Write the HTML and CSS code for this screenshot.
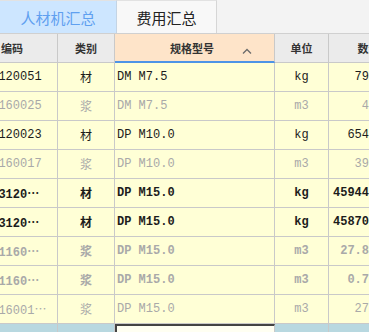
FILE: index.html
```html
<!DOCTYPE html>
<html lang="zh-CN">
<head>
    <meta charset="UTF-8">
    <title>人材机汇总</title>
    <link rel="stylesheet" href="styles.css">
</head>
<body>
    <div class="tabs">
        <div class="tab active">人材机汇总</div>
        <div class="tab">费用汇总</div>
    </div>
    <div class="grid-wrap">
        <table class="grid">
            <colgroup>
                <col class="c-code"><col class="c-type"><col class="c-spec"><col class="c-unit"><col class="c-qty">
            </colgroup>
            <thead>
                <tr>
                    <th class="code">编码</th>
                    <th>类别</th>
                    <th class="sorted">规格型号
                        <svg class="sort" width="10" height="6" viewBox="0 0 10 6"><polyline points="1,5.5 5,1.5 9,5.5" fill="none" stroke="#6b6b6b" stroke-width="1.3"/></svg>
                    </th>
                    <th>单位</th>
                    <th>数量</th>
                </tr>
            </thead>
            <tbody>
                <tr><td class="code">01120051</td><td class="type">材</td><td>DM M7.5</td><td class="unit">kg</td><td class="qty">79.2358</td></tr>
                <tr class="sub"><td class="code">02160025</td><td class="type">浆</td><td>DM M7.5</td><td class="unit">m3</td><td class="qty">4.1256</td></tr>
                <tr><td class="code">01120023</td><td class="type">材</td><td>DP M10.0</td><td class="unit">kg</td><td class="qty">6542.117</td></tr>
                <tr class="sub"><td class="code">02160017</td><td class="type">浆</td><td>DP M10.0</td><td class="unit">m3</td><td class="qty">39.1452</td></tr>
                <tr class="strong"><td class="code">013120⋯</td><td class="type">材</td><td>DP M15.0</td><td class="unit">kg</td><td class="qty">45944.1234</td></tr>
                <tr class="strong"><td class="code">013120⋯</td><td class="type">材</td><td>DP M15.0</td><td class="unit">kg</td><td class="qty">45870.9876</td></tr>
                <tr class="strong sub"><td class="code">021160⋯</td><td class="type">浆</td><td>DP M15.0</td><td class="unit">m3</td><td class="qty">27.812350</td></tr>
                <tr class="strong sub"><td class="code">021160⋯</td><td class="type">浆</td><td>DP M15.0</td><td class="unit">m3</td><td class="qty">0.712500</td></tr>
                <tr class="sub"><td class="code">0216001⋯</td><td class="type">浆</td><td>DP M15.0</td><td class="unit">m3</td><td class="qty">27.5000</td></tr>
                <tr class="current"><td class="code">04010107</td><td class="type">材</td><td class="focus">DP M20.0</td><td class="unit">kg</td><td class="qty">78.1200</td></tr>
            </tbody>
        </table>
    </div>
</body>
</html>
```

FILE: styles.css
```css
body { margin: 0; overflow: hidden; background: #f3f3f3; font-family: "Liberation Mono", "Noto Sans CJK SC", monospace; }

.tabs { display: flex; height: 33px; border-bottom: 1px solid #d0d0d0; background: #f3f3f3; }
.tab { width: 99px; display: flex; align-items: center; justify-content: center; border-right: 1px solid #d6d6d6; border-top: 1px solid #e2e2e2; background: #f8f8f8; color: #222; font-family: "Noto Sans CJK SC", sans-serif; font-size: 15px; }
.tab.active { width: 116px; background: #cde6ff; color: #5fa0f0; border-right-color: #c4d4e4; }

.grid-wrap { overflow: hidden; }
.grid { margin-left: -19px; width: 428px; table-layout: fixed; border-collapse: separate; border-spacing: 0; font-size: 12px; background: #ffffd6; }
.c-code { width: 77px; }
.c-type { width: 57px; }
.c-spec { width: 160px; }
.c-unit { width: 54px; }
.c-qty { width: 80px; }

.grid th, .grid td { box-sizing: border-box; height: 29px; border-right: 1px solid #c9c9c9; border-bottom: 1px solid #c9c9c9; white-space: nowrap; overflow: hidden; vertical-align: middle; }
.grid th { background: #ebebeb; color: #333; font-family: "Noto Sans CJK SC", sans-serif; font-size: 11px; font-weight: bold; text-align: center; }
.grid th.code { text-align: left; padding-left: 20px; }
.grid th.sorted { position: relative; background: #fee4c9; border-bottom: 2px solid #4d94e6; padding-right: 6px; }
.sort { position: absolute; right: 22px; top: 14px; }

.grid td { color: #1c1c1c; padding: 0 2px; }
.grid td.code { padding-left: 3px; }
.grid td.type, .grid td.unit { text-align: center; }
.grid td.qty { text-align: right; padding-right: 3px; }

.grid tr.sub td { color: #a9a9a9; }
.grid tr.strong td { font-weight: bold; }

.grid tr.current td { background: #b8d8e0; font-weight: bold; }
.grid tr.current td.focus { background: #fffff2; border-left: 2px solid #444; border-top: 2px solid #444; }
```
